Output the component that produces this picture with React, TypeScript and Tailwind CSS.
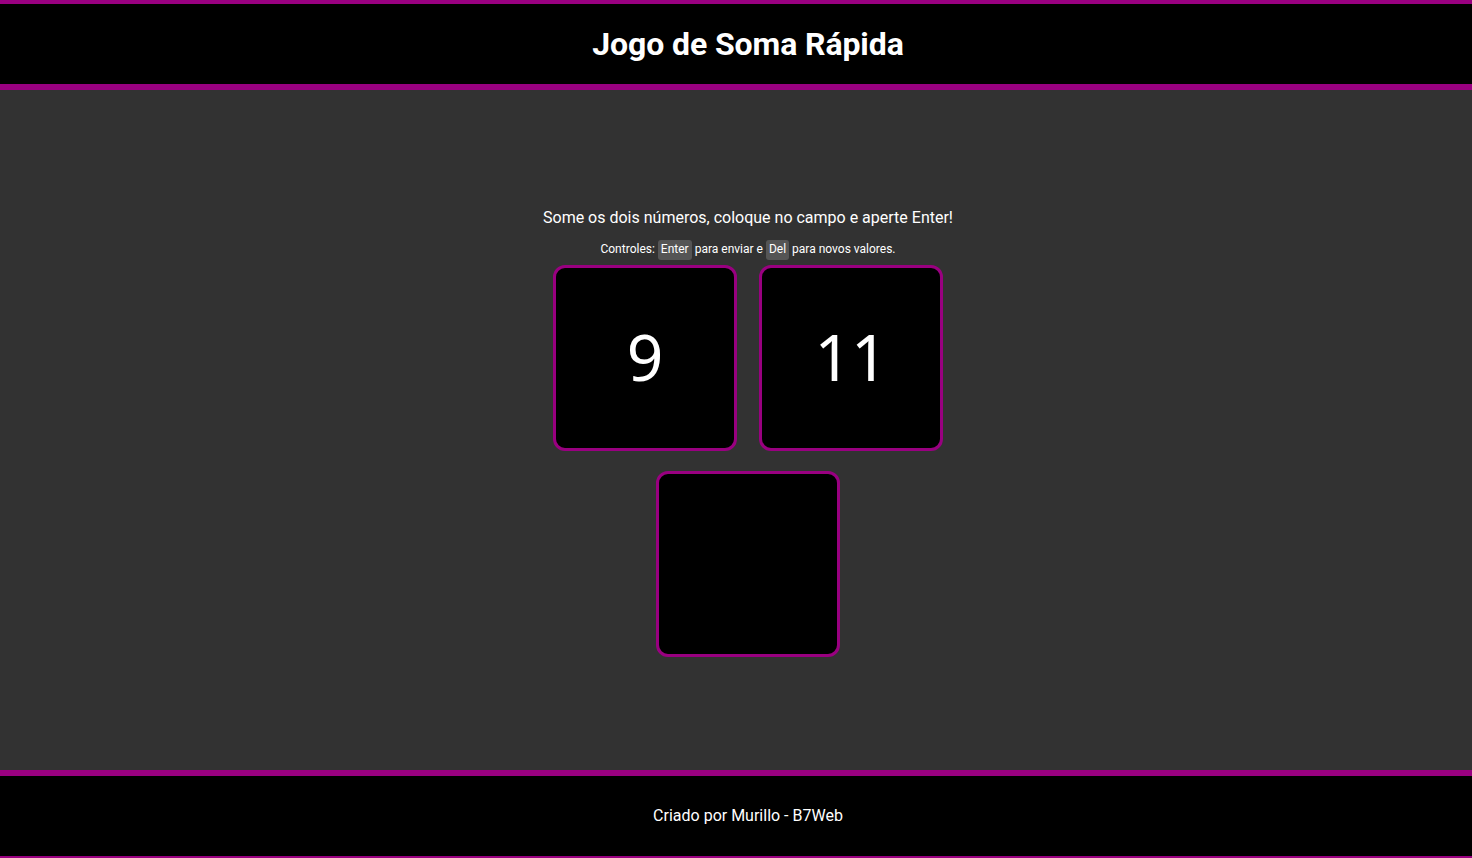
import React from "react";

export default function App() {
  const font = { fontFamily: "Roboto, 'Liberation Sans', sans-serif" };
  return (
    <div className="min-h-screen flex flex-col bg-[#323232] text-white" style={font}>
      <header className="h-[90px] bg-black border-t-4 border-b-[6px] border-[#990080] flex items-center justify-center pl-[24px]">
        <h1 className="text-[32px] font-bold leading-none tracking-[-0.1px]">Jogo de Soma Rápida</h1>
      </header>
      <main className="h-[680px] flex flex-col items-center pt-[118px] pl-[24px]">
        <p className="text-[16px] leading-[19px]">Some os dois números, coloque no campo e aperte Enter!</p>
        <p className="text-[12px] leading-[21px] mt-[12px] flex items-center">
          Controles:
          <kbd className="mx-[3px] px-[3px] rounded-[3px] bg-[#555555] text-[12px] leading-[19px] pb-[1px]" style={font}>Enter</kbd>
          para enviar e
          <kbd className="mx-[3px] px-[3px] rounded-[3px] bg-[#555555] text-[12px] leading-[19px] pb-[1px]" style={font}>Del</kbd>
          para novos valores.
        </p>
        <div className="mt-[5px] flex gap-[22px]">
          <div className="w-[184px] h-[186px] bg-black border-[3px] border-[#990080] rounded-[12px] flex items-center justify-center text-[64px] font-['Noto_Sans','Open_Sans',sans-serif]">
            <span className="mt-[-2px]">9</span>
          </div>
          <div className="w-[184px] h-[186px] bg-black border-[3px] border-[#990080] rounded-[12px] flex items-center justify-center text-[64px] font-['Noto_Sans','Open_Sans',sans-serif]">
            <span className="mt-[-2px]">11</span>
          </div>
        </div>
        <div className="mt-[20px] w-[184px] h-[186px] bg-black border-[3px] border-[#990080] rounded-[12px]"></div>
      </main>
      <footer className="h-[90px] bg-black border-t-[6px] border-b-4 border-[#990080] flex items-center justify-center pl-[24px]">
        <p className="text-[16px]">Criado por Murillo - B7Web</p>
      </footer>
    </div>
  );
}
